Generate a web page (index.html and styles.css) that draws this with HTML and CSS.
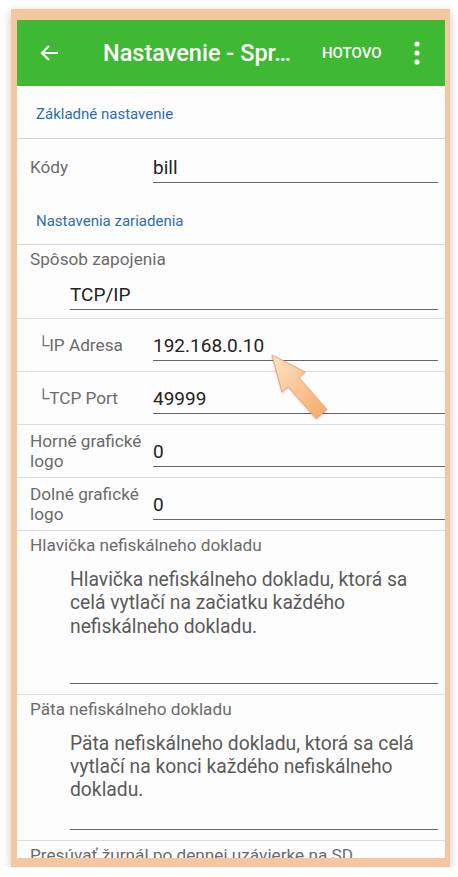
FILE: index.html
```html
<!DOCTYPE html>
<html>
  <head>
    <meta name="viewport" content="width=device-width, initial-scale=1" />
    <link rel="stylesheet" href="styles.css">
  </head>
  <body>
    <div class="frame">
      <div class="screen">
        <div class="appbar">
          <svg class="back" width="24" height="24" viewBox="0 0 24 24">
            <path d="M20 12H5M11 5l-7 7 7 7" fill="none" stroke="#fff" stroke-width="2.2" />
          </svg>
          <div class="title">Nastavenie - Spr…</div>
          <div class="action">HOTOVO</div>
          <svg class="more" width="8" height="26" viewBox="0 0 8 26">
            <circle cx="4" cy="4" r="2.6" fill="#fff" />
            <circle cx="4" cy="13" r="2.6" fill="#fff" />
            <circle cx="4" cy="22" r="2.6" fill="#fff" />
          </svg>
        </div>

        <div class="section first">Základné nastavenie</div>

        <div class="row plain">
          <div class="label">Kódy</div>
          <div class="field">bill</div>
        </div>

        <div class="section">Nastavenia zariadenia</div>

        <div class="stack short">
          <div class="label">Spôsob zapojenia</div>
          <div class="field choice">TCP/IP</div>
        </div>

        <div class="row">
          <div class="label sub">└IP Adresa</div>
          <div class="field">192.168.0.10</div>
        </div>

        <div class="row">
          <div class="label sub">└TCP Port</div>
          <div class="field wide">49999</div>
        </div>

        <div class="row">
          <div class="label">Horné grafické logo</div>
          <div class="field wide">0</div>
        </div>

        <div class="row">
          <div class="label">Dolné grafické logo</div>
          <div class="field wide">0</div>
        </div>

        <div class="stack">
          <div class="label">Hlavička nefiskálneho dokladu</div>
          <div class="field area tall">Hlavička nefiskálneho dokladu, ktorá sa celá vytlačí na začiatku každého nefiskálneho dokladu.</div>
        </div>

        <div class="stack">
          <div class="label">Päta nefiskálneho dokladu</div>
          <div class="field area">Päta nefiskálneho dokladu, ktorá sa celá vytlačí na konci každého nefiskálneho dokladu.</div>
        </div>

        <div class="stack">
          <div class="label">Presúvať žurnál po dennej uzávierke na SD</div>
        </div>
      </div>

      <svg class="pointer" width="80" height="85" viewBox="0 0 80 85">
        <defs>
          <linearGradient id="ptr" x1="0" y1="0" x2="1" y2="1">
            <stop offset="0" stop-color="#fee3c8" />
            <stop offset="1" stop-color="#f6a964" />
          </linearGradient>
        </defs>
        <polygon points="10,10 43,27 36.8,32.4 64.8,64.4 54.2,73.6 26.2,41.6 20,47"
          fill="url(#ptr)" stroke="#eda46a" stroke-width="1" stroke-linejoin="round" />
      </svg>
    </div>
  </body>
</html>
```

FILE: styles.css
```css
* {
  box-sizing: border-box;
}

body {
  margin: 0;
  background: #fff;
  font-family: Roboto, "Noto Sans", sans-serif;
}

.frame {
  position: relative;
  width: 439px;
  height: 858px;
  margin: 9px 0 0 11px;
  padding: 11px 5px 9px 6px;
  background: #f5c7a1;
  box-shadow: 0 3px 9px rgba(0, 0, 0, 0.22);
}

.screen {
  height: 838px;
  overflow: hidden;
  background: #fdfdfd;
}

.appbar {
  display: flex;
  align-items: center;
  height: 66px;
  padding: 0 0 0 21px;
  background: #3fb834;
  color: #fff;
}

.back {
  flex: none;
}

.title {
  margin-left: 41px;
  font-size: 23.5px;
  font-weight: 500;
  white-space: nowrap;
}

.action {
  margin-left: 31px;
  font-size: 15px;
  font-weight: 500;
}

.more {
  margin-left: 31px;
}

.section {
  display: flex;
  align-items: center;
  height: 50px;
  padding: 3px 0 0 19px;
  color: #2e6dab;
  font-size: 15px;
  border-bottom: 1px solid #d3d6da;
}

.section.first {
  height: 53px;
}

.label {
  color: #6b6b6b;
  font-size: 17.2px;
  line-height: 20px;
}

.field {
  color: #222;
  font-size: 19px;
  line-height: 22px;
  padding-bottom: 3px;
  border-bottom: 1.5px solid #666;
}

.row {
  display: flex;
  align-items: center;
  height: 53px;
  padding-left: 13px;
  border-bottom: 1px solid #dcdcdc;
}

.row.plain {
  height: 56px;
  border-bottom: none;
}

.row .label {
  width: 123px;
  flex: none;
}

.row .label.sub {
  padding-left: 7px;
}

.row .field {
  flex: 1;
  margin: 5px 7px 0 0;
}

.row .field.wide {
  margin-right: 0;
}

.stack {
  padding: 4px 7px 10px 13px;
  border-bottom: 1px solid #dcdcdc;
}

.stack.short {
  padding-bottom: 8px;
}

.stack .field {
  margin: 13px 0 0 40px;
}

.stack .field.choice {
  margin-top: 15px;
}

.field.area {
  color: #5a5a5a;
  font-size: 19.3px;
  line-height: 23.3px;
  padding: 0 0 27px 0;
}

.field.area.tall {
  padding-bottom: 45px;
}

.pointer {
  position: absolute;
  left: 251px;
  top: 336px;
  filter: drop-shadow(0 1px 1px rgba(0, 0, 0, 0.2));
}
```
